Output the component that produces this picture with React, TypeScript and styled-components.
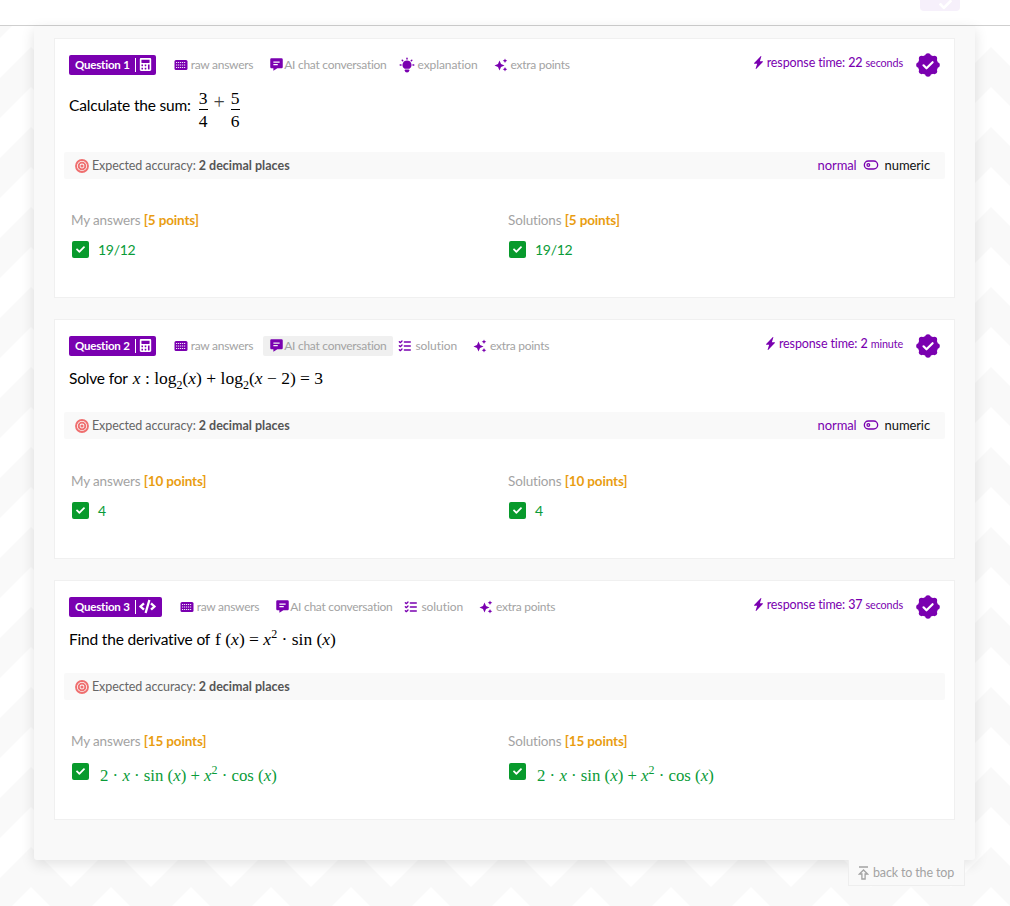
import { ReactNode } from "react";
import styled, { createGlobalStyle } from "styled-components";
import { BsLightningChargeFill } from "react-icons/bs";
import { FaCalculator, FaCheck, FaCode } from "react-icons/fa";
import { BiSolidMessageDetail } from "react-icons/bi";
import { TbBulbFilled, TbListCheck, TbTarget, TbToggleLeft } from "react-icons/tb";

const PURPLE = "#7a00b0";
const chevron =
  "url(\"data:image/svg+xml,%3Csvg xmlns='http://www.w3.org/2000/svg' width='80' height='80'%3E%3Cpath fill='%23f9f9f9' d='M0 80L40 40L80 80ZM0 0H40L0 40ZM80 0H40L80 40Z'/%3E%3C/svg%3E\")";

const GlobalStyle = createGlobalStyle`
  html, body {
    margin: 0;
    height: 906px;
    overflow: hidden;
    background: #fff;
    font-family: "Lato", "Noto Sans", sans-serif;
  }
`;

const Page = styled.div`
  height: 906px;
  background-image: ${chevron};
  background-position: -9px 7px;
`;

const TopBar = styled.header`
  height: 25px;
  background: #fff;
  border-bottom: 1px solid #cfcfcf;
  display: flex;
  justify-content: flex-end;
  padding-right: 50px;
`;

const TopButton = styled.div`
  display: flex;
  justify-content: flex-end;
  align-items: flex-end;
  width: 40px;
  height: 11px;
  padding-right: 8px;
  box-sizing: border-box;
  overflow: hidden;
  background: #f6f0fb;
  border-radius: 0 0 4px 4px;
  color: #fff;
  font-size: 13px;
`;

const Panel = styled.main`
  width: 901px;
  margin-left: 34px;
  padding: 12px 20px 40px;
  background: #f9f9f9;
  border-radius: 0 0 3px 3px;
  box-shadow: 0 4px 14px rgba(0, 0, 0, 0.12);
  display: flex;
  flex-direction: column;
  gap: 21px;
`;

const Card = styled.section`
  background: #fff;
  border: 1px solid #f0f0f0;
  padding: 16px 9px 0;
`;

const CardHead = styled.div`
  display: flex;
  align-items: flex-start;
  padding: 0 5px;
  height: 20px;
`;

const Tag = styled.div`
  display: flex;
  align-items: center;
  height: 20px;
  box-sizing: border-box;
  padding: 0 6px 1px;
  margin-right: 12px;
  background: ${PURPLE};
  color: #fff;
  font-size: 11.5px;
  font-weight: 700;
  letter-spacing: -0.2px;
  border-radius: 2px;
  white-space: nowrap;
`;

const TagDivider = styled.span`
  width: 1px;
  height: 14px;
  background: #fff;
  margin: 0 3px 0 5px;
`;

const TagCalculator = styled(FaCalculator)`
  margin-right: -2px;
`;

const Tool = styled.div<{ $active?: boolean }>`
  display: flex;
  align-items: center;
  gap: 3px;
  height: 20px;
  box-sizing: border-box;
  padding: 0 6px 1px;
  margin-right: 4px;
  color: #a3a3a3;
  font-size: 12px;
  letter-spacing: -0.27px;
  white-space: nowrap;
  border-radius: 2px;
  background: ${(p) => (p.$active ? "#f0f0f0" : "transparent")};
  &:nth-child(3) {
    margin-right: 0;
  }
  &:nth-child(4) {
    letter-spacing: -0.09px;
  }
  svg {
    color: ${PURPLE};
    flex: none;
  }
`;

const ChatIcon = styled(BiSolidMessageDetail)`
  margin-right: -3px;
`;

const SolutionIcon = styled(TbListCheck)`
  margin-left: -2px;
`;

const BulbIcon = styled(TbBulbFilled)`
  margin: 0 -1px;
`;

const HeadRight = styled.div`
  margin-left: auto;
  display: flex;
  align-items: flex-start;
  gap: 13px;
`;

const ResponseTime = styled.div`
  display: flex;
  align-items: baseline;
  gap: 2px;
  color: ${PURPLE};
  font-size: 12.5px;
  letter-spacing: -0.12px;
  white-space: nowrap;
  b {
    font-weight: 500;
  }
  small {
    font-size: 10.8px;
  }
  svg {
    align-self: center;
    font-size: 13px;
  }
`;

const Badge = styled.svg`
  width: 24px;
  height: 24px;
  margin-top: -2px;
  flex: none;
  fill: ${PURPLE};
`;

const Question = styled.div<{ $tall?: boolean }>`
  display: flex;
  align-items: center;
  gap: 5px;
  height: ${(p) => (p.$tall ? "77px" : "56px")};
  padding: ${(p) => (p.$tall ? "0 5px 17px" : "0 5px 12px")};
  box-sizing: border-box;
  color: #000;
  font-size: 15.5px;
  letter-spacing: -0.18px;
  white-space: nowrap;
`;

const MathText = styled.span`
  display: inline-block;
  font-family: "Liberation Serif", serif;
  font-size: 17.5px;
  letter-spacing: 0;
  i {
    font-style: italic;
  }
  sub,
  sup {
    font-size: 12px;
    line-height: 0;
  }
`;

const Frac = styled.span`
  display: inline-flex;
  flex-direction: column;
  align-items: center;
  vertical-align: middle;
  margin: 10px 3px 0;
  line-height: 17px;
  span:first-child {
    border-bottom: 1px solid #000;
    padding-bottom: 2px;
  }
  span:last-child {
    padding-top: 3px;
  }
`;

const Operator = styled.span`
  margin: 0 3px;
  font-size: 20px;
  color: #444;
`;

const AccuracyBar = styled.div`
  display: flex;
  align-items: center;
  justify-content: space-between;
  height: 27px;
  padding: 0 15px 0 10px;
  background: #f9f9f9;
  border-radius: 2px;
  color: #666;
  font-size: 12.5px;
  letter-spacing: -0.1px;
  b {
    color: #555;
    font-weight: 700;
    letter-spacing: 0;
  }
`;

const Accuracy = styled.div`
  display: flex;
  align-items: center;
  gap: 2px;
  svg {
    color: #ef6f6f;
    font-size: 16px;
    stroke-width: 2.8;
  }
`;

const Mode = styled.div`
  display: flex;
  align-items: center;
  gap: 6px;
  margin-top: -1px;
  color: #111;
  font-size: 13px;
  em {
    color: ${PURPLE};
    font-style: normal;
  }
  svg {
    color: ${PURPLE};
    font-size: 16px;
  }
`;

const Answers = styled.div<{ $top: number; $bottom: number }>`
  display: grid;
  grid-template-columns: 437px 1fr;
  padding: ${(p) => p.$top}px 7px ${(p) => p.$bottom}px;
`;

const AnswerCol = styled.div`
  display: flex;
  flex-direction: column;
  gap: 12px;
`;

const AnswerLabel = styled.div`
  color: #a3a3a3;
  font-size: 13.5px;
  letter-spacing: -0.15px;
  line-height: 16px;
  b {
    color: #e99d12;
    font-weight: 700;
  }
`;

const AnswerValue = styled.div<{ $math?: boolean }>`
  display: flex;
  align-items: ${(p) => (p.$math ? "flex-start" : "center")};
  gap: ${(p) => (p.$math ? "11px" : "9px")};
  min-height: ${(p) => (p.$math ? "32px" : "19px")};
  margin-top: ${(p) => (p.$math ? "2px" : "0")};
  color: #0a9b38;
  font-size: 14px;
  letter-spacing: -0.3px;
  ${MathText} {
    margin-top: 3px;
    font-size: 16.8px;
  }
`;

const Check = styled.span`
  display: inline-flex;
  align-items: center;
  justify-content: center;
  width: 17px;
  height: 17px;
  flex: none;
  margin-left: 1px;
  background: #089a2c;
  border-radius: 2px;
  color: #fff;
  font-size: 9px;
`;

const Footer = styled.div`
  display: flex;
  justify-content: flex-end;
  padding-right: 45px;
`;

const BackToTop = styled.div`
  display: flex;
  align-items: center;
  gap: 4px;
  height: 25px;
  padding: 0 10px 0 9px;
  background: #f9f9f9;
  border: 1px solid #eee;
  border-top: 0;
  color: #a3a3a3;
  font-size: 12.5px;
  letter-spacing: -0.15px;
`;

const TopArrow = styled.svg`
  width: 11px;
  height: 14px;
  fill: none;
  stroke: #a3a3a3;
  stroke-width: 1.3;
`;

const KeyboardIcon = () => (
  <svg width="14" height="14" viewBox="0 0 14 14">
    <rect x="0.5" y="2" width="13" height="10" rx="1.5" fill="currentColor" />
    <path
      d="M2 4.5h10M2 7h10M2 9.5h10"
      stroke="#fff"
      strokeWidth="0.9"
      strokeDasharray="1.2 0.8"
      fill="none"
    />
  </svg>
);

const SparkleIcon = () => (
  <svg width="14" height="14" viewBox="0 0 14 14" fill="currentColor">
    <path d="M5.5 2.5L7 6l3.5 1.5L7 9l-1.5 3.5L4 9 .5 7.5 4 6z" />
    <path d="M11 .5l.7 1.6 1.6.7-1.6.7-.7 1.6-.7-1.6-1.6-.7 1.6-.7zM11 9l.7 1.6 1.6.7-1.6.7-.7 1.6-.7-1.6-1.6-.7 1.6-.7z" />
  </svg>
);

const scallops = [0, 45, 90, 135, 180, 225, 270, 315].map((deg) => ({
  cx: 12 + 9 * Math.cos((deg * Math.PI) / 180),
  cy: 12 + 9 * Math.sin((deg * Math.PI) / 180),
}));

const VerifiedBadge = () => (
  <Badge viewBox="0 0 24 24">
    <circle cx="12" cy="12" r="10.2" />
    {scallops.map((s) => (
      <circle key={s.cx + "-" + s.cy} cx={s.cx} cy={s.cy} r="2.8" />
    ))}
    <path
      d="M7.5 12.3l3 3L16.6 9.2"
      fill="none"
      stroke="#fff"
      strokeWidth="2.2"
      strokeLinecap="round"
      strokeLinejoin="round"
    />
  </Badge>
);

type Item = { icon: ReactNode; label: string; active?: boolean };

const tools = (middle: Item, active?: boolean): Item[] => [
  { icon: <KeyboardIcon />, label: "raw answers" },
  { icon: <ChatIcon size={15} />, label: "AI chat conversation", active },
  middle,
  { icon: <SparkleIcon />, label: "extra points" },
];

const solution = { icon: <SolutionIcon size={16} />, label: "solution" };

type QuestionCardProps = {
  n: number;
  typeIcon: ReactNode;
  items: Item[];
  time: string;
  unit: string;
  tall?: boolean;
  mode?: boolean;
  points: number;
  top?: number;
  bottom: number;
  question: ReactNode;
  answer: ReactNode;
  mathAnswer?: boolean;
};

const QuestionCard = (p: QuestionCardProps) => (
  <Card>
    <CardHead>
      <Tag>
        Question {p.n}
        <TagDivider />
        {p.typeIcon}
      </Tag>
      {p.items.map((item) => (
        <Tool key={item.label} $active={item.active}>
          {item.icon}
          {item.label}
        </Tool>
      ))}
      <HeadRight>
        <ResponseTime>
          <BsLightningChargeFill />
          <span>
            response time: <b>{p.time}</b> <small>{p.unit}</small>
          </span>
        </ResponseTime>
        <VerifiedBadge />
      </HeadRight>
    </CardHead>
    <Question $tall={p.tall}>{p.question}</Question>
    <AccuracyBar>
      <Accuracy>
        <TbTarget />
        <span>
          Expected accuracy: <b>2 decimal places</b>
        </span>
      </Accuracy>
      {p.mode && (
        <Mode>
          <em>normal</em>
          <TbToggleLeft />
          numeric
        </Mode>
      )}
    </AccuracyBar>
    <Answers $top={p.top ?? 33} $bottom={p.bottom}>
      {["My answers", "Solutions"].map((title) => (
        <AnswerCol key={title}>
          <AnswerLabel>
            {title} <b>[{p.points} points]</b>
          </AnswerLabel>
          <AnswerValue $math={p.mathAnswer}>
            <Check>
              <FaCheck />
            </Check>
            {p.answer}
          </AnswerValue>
        </AnswerCol>
      ))}
    </Answers>
  </Card>
);

const derivative = (
  <MathText>
    2 · <i>x</i> · sin (<i>x</i>) + <i>x</i>
    <sup>2</sup> · cos (<i>x</i>)
  </MathText>
);

export default function App() {
  return (
    <Page>
      <GlobalStyle />
      <TopBar>
        <TopButton>
          <FaCheck />
        </TopButton>
      </TopBar>
      <Panel>
        <QuestionCard
          n={1}
          typeIcon={<TagCalculator size={13} />}
          items={tools({ icon: <BulbIcon size={18} />, label: "explanation" })}
          time="22"
          unit="seconds"
          tall
          mode
          points={5}
          bottom={38}
          question={
            <>
              Calculate the sum:
              <MathText>
                <Frac>
                  <span>3</span>
                  <span>4</span>
                </Frac>
                <Operator>+</Operator>
                <Frac>
                  <span>5</span>
                  <span>6</span>
                </Frac>
              </MathText>
            </>
          }
          answer="19/12"
        />
        <QuestionCard
          n={2}
          typeIcon={<TagCalculator size={13} />}
          items={tools(solution, true)}
          time="2"
          unit="minute"
          mode
          points={10}
          top={34}
          bottom={38}
          question={
            <>
              Solve for
              <MathText>
                <i>x</i>&nbsp;: log<sub>2</sub>(<i>x</i>) + log<sub>2</sub>(<i>x</i>&nbsp;− 2) = 3
              </MathText>
            </>
          }
          answer="4"
        />
        <QuestionCard
          n={3}
          typeIcon={<FaCode size={17} />}
          items={tools(solution)}
          time="37"
          unit="seconds"
          points={15}
          bottom={24}
          question={
            <>
              Find the derivative of
              <MathText>
                f (<i>x</i>) = <i>x</i>
                <sup>2</sup> · sin (<i>x</i>)
              </MathText>
            </>
          }
          answer={derivative}
          mathAnswer
        />
      </Panel>
      <Footer>
        <BackToTop>
          <TopArrow viewBox="0 0 11 14">
            <path d="M1 1h9M5.5 4L1.5 8h2.4v5h3.2V8h2.4z" />
          </TopArrow>
          back to the top
        </BackToTop>
      </Footer>
    </Page>
  );
}
